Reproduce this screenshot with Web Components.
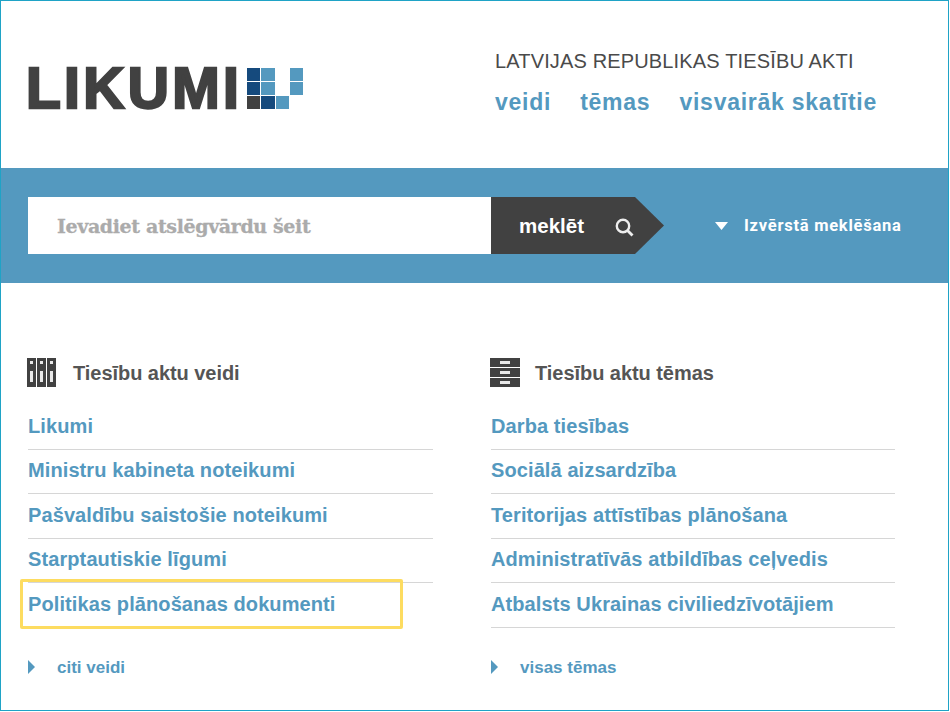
<!DOCTYPE html>
<html lang="lv"><head><meta charset="utf-8"><title>Likumi</title>
<style>
html,body{margin:0;padding:0;background:#fff;width:950px;height:712px;overflow:hidden}
body{font-family:"Liberation Sans",Arial,sans-serif}
</style></head><body>
<lk-page>
  <lk-header></lk-header>
  <lk-search></lk-search>
  <lk-columns>
    <lk-column heading="Tiesību aktu veidi" icon="binders" width="405" more="citi veidi" items="Likumi|Ministru kabineta noteikumi|Pašvaldību saistošie noteikumi|Starptautiskie līgumi|Politikas plānošanas dokumenti" highlight="4"></lk-column>
    <lk-column heading="Tiesību aktu tēmas" icon="drawers" width="404" gap="15" more="visas tēmas" items="Darba tiesības|Sociālā aizsardzība|Teritorijas attīstības plānošana|Administratīvās atbildības ceļvedis|Atbalsts Ukrainas civiliedzīvotājiem"></lk-column>
  </lk-columns>
</lk-page>
<script>
function def(name, html){
  customElements.define(name, class extends HTMLElement{
    connectedCallback(){
      if(this.shadowRoot) return;
      const r=this.attachShadow({mode:'open'});
      r.innerHTML=typeof html==='function'?html(this):html;
    }
  });
}
def('lk-page',`<style>
:host{display:flex;flex-direction:column;box-sizing:border-box;width:949px;height:711px;overflow:hidden;
border:1px solid #1fa3c6;background:#fff;margin:0;
font-family:"Liberation Sans",Arial,sans-serif}
</style><slot></slot>`);
def('lk-header',`<style>
:host{display:flex;height:167px;box-sizing:border-box;padding-left:27px;flex:none}
.logo{display:flex;align-items:flex-start;gap:7px;width:467px;padding-top:58px;box-sizing:border-box}
.word{font:700 57px/57px "Liberation Sans",sans-serif;color:#414141;-webkit-text-stroke:2.4px #414141;letter-spacing:3.300px;margin-top:1px;text-indent:-2px;width:212px;white-space:nowrap;overflow:visible}
.mark{display:grid;grid-template-columns:repeat(4,14.4px);grid-template-rows:repeat(3,14px);margin-top:9px}
.mark i{display:block;width:13.2px;height:13px}
.d{background:#154a7d}.l{background:#5499bf}.k{background:#414141}
nav{padding-top:50px}
.t{font-size:20px;line-height:20px;color:#4a4a4a;letter-spacing:.15px;white-space:nowrap}
.links{display:flex;gap:29px;margin-top:16px;font-weight:700;font-size:23px;line-height:30px;color:#5499bf;letter-spacing:.75px;white-space:nowrap}
</style>
<div class="logo"><div class="word">LIKUMI</div>
<div class="mark"><i class="d"></i><i class="l"></i><i></i><i class="l"></i><i class="d"></i><i class="l"></i><i></i><i class="l"></i><i class="k"></i><i class="d"></i><i class="l"></i><i></i></div></div>
<nav><div class="t">LATVIJAS REPUBLIKAS TIESĪBU AKTI</div>
<div class="links"><span>veidi</span><span>tēmas</span><span>visvairāk skatītie</span></div></nav>`);
def('lk-search',`<style>
:host{display:flex;align-items:center;height:115px;flex:none;background:#5499bf;padding-left:27px;box-sizing:border-box}
.input{width:463px;height:57px;background:#fff;display:flex;align-items:center;padding-left:29px;box-sizing:border-box;
font:700 19px "DejaVu Serif",serif;color:#ababab;-webkit-text-stroke:.3px #ababab;letter-spacing:-.37px;white-space:nowrap}
.btn{width:173px;height:57px;background:#414141;clip-path:polygon(0 0,144px 0,100% 50%,144px 100%,0 100%);display:flex;align-items:center;box-sizing:border-box;padding-left:28px;
color:#fff;font:700 20.500px "Liberation Sans",sans-serif;white-space:nowrap}
.btn svg{margin-left:30px;margin-top:2px}
.adv{display:flex;align-items:center;margin-left:51px;color:#fff;font:700 16.500px "Roboto","Liberation Sans",sans-serif;letter-spacing:.75px;white-space:nowrap}
.adv svg{margin-right:16px}
</style>
<div class="input">Ievadiet atslēgvārdu šeit</div>
<div class="btn"><span>meklēt</span><svg width="20" height="20" viewBox="0 0 20 20" fill="none" stroke="#eee"><circle cx="9" cy="9" r="6.2" stroke-width="2.4"/><path d="M13.500 13.500L18.500 18.500" stroke-width="2.800"/></svg></div>
<div class="adv"><svg width="13" height="8" viewBox="0 0 13 8"><path d="M0 0H13L6.500 8Z" fill="#fff"/></svg><span>Izvērstā meklēšana</span></div>`);
def('lk-columns',`<style>
:host{display:flex;flex:1;padding:75px 0 0 27px;box-sizing:border-box;gap:58px}
</style><slot></slot>`);
const icons={
binders:`<svg width="30" height="30" viewBox="0 0 30 30"><rect width="9" height="29" x="0" y="0" fill="#414141"/><rect width="9" height="29" x="10" y="0" fill="#414141"/><rect width="9" height="29" x="20" y="0" fill="#414141"/>
<g fill="#e8e8e8"><rect x="3" y="3" width="3" height="3"/><rect x="13" y="3" width="3" height="3"/><rect x="23" y="3" width="3" height="3"/><rect x="3" y="13" width="3" height="11"/><rect x="13" y="13" width="3" height="11"/><rect x="23" y="13" width="3" height="11"/></g></svg>`,
drawers:`<svg width="30" height="30" viewBox="0 0 30 30"><g fill="#414141"><rect width="30" height="9" y="0"/><rect width="30" height="9" y="10"/><rect width="30" height="9" y="20"/></g><g fill="#e8e8e8"><rect x="10" y="3" width="10" height="3"/><rect x="10" y="13" width="10" height="3"/><rect x="10" y="23" width="10" height="3"/></g></svg>`};
def('lk-column',h=>{
 const items=h.getAttribute('items').split('|');
 const hl=h.getAttribute('highlight');
 const gap=h.getAttribute('gap')||16;
 return `<style>
:host{display:block;width:${h.getAttribute('width')}px;flex:none}
.head{display:flex;align-items:center;gap:${gap}px;height:30px;font-weight:700;font-size:20px;color:#555;letter-spacing:-.05px;white-space:nowrap}
.head svg{flex:none;margin-left:-1px}
ul{list-style:none;margin:17px 0 0;padding:0}
li{position:relative;height:44.500px;box-sizing:border-box;border-bottom:1px solid #d6d6d6;
font-weight:700;font-size:20px;line-height:41.500px;color:#5499bf;white-space:nowrap;letter-spacing:.1px}
li:nth-child(odd){line-height:43.500px}
li.hl{border-bottom-color:transparent}
li.hl::after{content:"";position:absolute;left:-8px;top:-4px;width:383px;height:50px;border:3px solid #fddc60;border-radius:2px;box-sizing:border-box}
.more{display:flex;align-items:center;margin-top:29px;height:22px;color:#5499bf;font-weight:700;font-size:17px;white-space:nowrap}
.more svg{margin-right:22px;margin-top:-2px}
</style>
<div class="head">${icons[h.getAttribute('icon')]}<span>${h.getAttribute('heading')}</span></div>
<ul>${items.map((t,i)=>`<li class="${String(i)===hl?'hl':''}">${t}</li>`).join('')}</ul>
<div class="more"><svg width="7" height="14" viewBox="0 0 7 14"><path d="M0 0L7 7L0 14Z" fill="#5499bf"/></svg><span>${h.getAttribute('more')}</span></div>`;
});
</script></body></html>
